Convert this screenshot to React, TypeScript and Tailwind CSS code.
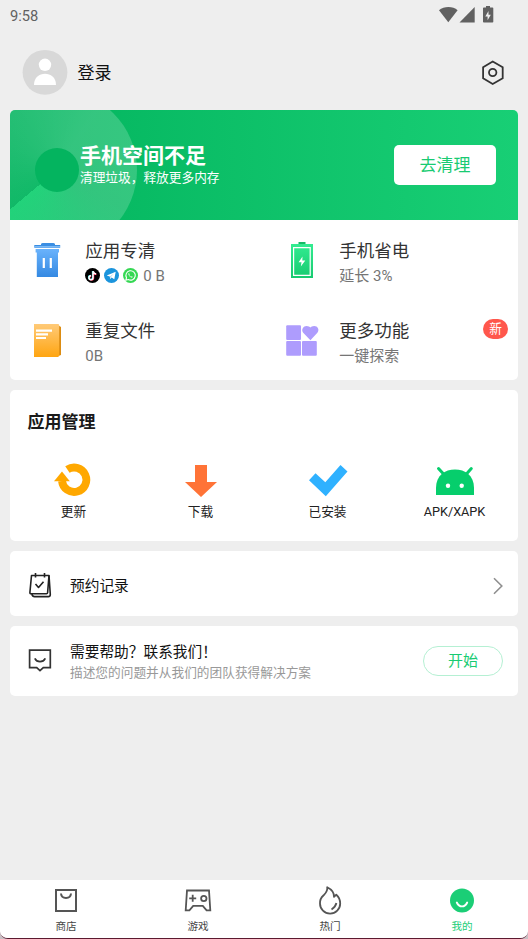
import type { ReactNode } from "react"
import clsx from "clsx"

interface FeatureProps {
  icon: ReactNode
  title: string
  badge?: string
  children: ReactNode
}

function StatusBar() {
  return (
    <div className="flex h-8 items-start justify-between pl-[10px] pr-[34px] pt-[6px] text-[#616161]">
      <span className="text-[14.700px] leading-[20px]">9:58</span>
      <svg width="56" height="18" viewBox="0 0 56 18" fill="currentColor">
        <path d="M1 4.2C6-.1 15-.1 19.600 4.200L10.300 16.200Z" />
        <path d="M36.700 1V16.500H21.500Z" />
        <path
          fillRule="evenodd"
          d="M48 0h4v1.500h2.500q.8 0 .8.800v13.400q0 .8-.8.800h-8.700q-.8 0-.8-.8V2.300q0-.8.8-.8H48zM50.500 5l-3.200 5.400h2.300v3.900l3.200-5.600h-2.300z"
        />
      </svg>
    </div>
  )
}

function Header() {
  return (
    <div className="flex h-[78px] items-start pl-[22px] pr-[23px] pt-[17px]">
      <svg width="46" height="46" viewBox="0 0 46 46">
        <circle cx="23" cy="23.300" r="22.400" fill="#d8d8d8" />
        <circle cx="23" cy="15.800" r="6.200" fill="#fff" />
        <path d="M12 36C12 21.100 34 21.100 34 36Z" fill="#fff" />
      </svg>
      <span className="ml-[9.500px] mt-[11px] flex-1 text-[17px] leading-[26px] text-[#111]">登录</span>
      <svg className="mt-[10.500px]" width="24" height="26" viewBox="0 0 24 26" fill="none" stroke="#333" strokeWidth="1.800">
        <path d="M11.700 1.500L21.700 7.200V18.300L11.700 24L2.100 18.300V7.200Z" />
        <circle cx="11.700" cy="12.500" r="3.700" />
      </svg>
    </div>
  )
}

function Banner() {
  return (
    <div className="relative flex h-[110px] items-center justify-between overflow-hidden bg-linear-to-r from-[#02b45e] to-[#18cf75] pl-[70px] pr-[22px]">
      <div className="absolute -left-[33px] -top-[20px] size-40 rounded-full bg-[conic-gradient(from_230deg,rgba(255,255,255,0.06),rgba(255,255,255,0.12)_20%,rgba(255,255,255,0.19)_45%,rgba(255,255,255,0.18)_70%,rgba(60,235,145,0.55))]" />
      <div className="absolute left-[25px] top-[37.500px] size-[44px] rounded-full bg-[#04b45f]" />
      <div className="relative mt-[2px] text-white">
        <h2 className="text-[21px] font-bold leading-[24px]">手机空间不足</h2>
        <p className="text-[12.700px] leading-[20px]">清理垃圾，释放更多内存</p>
      </div>
      <button className="h-10 w-[102px] rounded-[5px] bg-white pt-px text-[17px] text-[#18cb72]">去清理</button>
    </div>
  )
}

function TrashIcon() {
  return (
    <svg width="36" height="40" viewBox="0 0 36 40">
      <defs>
        <linearGradient id="trash" x1="0" y1="0" x2="0" y2="1">
          <stop stopColor="#6ab3fc" />
          <stop offset="1" stopColor="#3489e2" />
        </linearGradient>
      </defs>
      <path d="M11 3.800L12.500 3H23.500L25 3.800V5H30.200V7.800H4.300V5H11Z" fill="#3a8ee3" />
      <path d="M4.500 6H30V7.300H4.500Z" fill="#79b9f7" />
      <path d="M5.600 9H29V12.500H28V37H6.800V12.500H5.600Z" fill="url(#trash)" />
      <path d="M12.700 18h2.200v10h-2.200zM19.700 18h2.200v10h-2.200z" fill="#fff" />
    </svg>
  )
}

function BatteryIcon() {
  return (
    <svg width="36" height="40" viewBox="0 0 36 40">
      <defs>
        <linearGradient id="battery" x1="0" y1="0" x2="0" y2="1">
          <stop stopColor="#33ec91" />
          <stop offset="1" stopColor="#17ca70" />
        </linearGradient>
      </defs>
      <path d="M14.500 2H21.500V5H14.500Z" fill="#17b966" />
      <path d="M7 4H29V38H7Z" fill="url(#battery)" />
      <path d="M9.600 7.600H26.200V35.400H9.600Z" fill="none" stroke="#fff" strokeWidth="1.200" />
      <path d="M18.500 16.500L14.600 22.300H17.500L16.800 26.500L21.300 20.600H18.300Z" fill="#fff" />
    </svg>
  )
}

function FileIcon() {
  return (
    <svg width="36" height="40" viewBox="0 0 36 40">
      <defs>
        <linearGradient id="file" x1="0" y1="0" x2="0" y2="1">
          <stop stopColor="#ffca78" />
          <stop offset="1" stopColor="#ffa511" />
        </linearGradient>
      </defs>
      <path d="M27 4.500L31 7V35L27 36.500Z" fill="#dc8c12" />
      <path d="M4 4H28.500L29.200 5V36L28 37H4Z" fill="url(#file)" />
      <path d="M6 9.500H22v2.200H6zM6 13.200H18v2.200H6zM6 17H16v2.100H6z" fill="#fff" />
    </svg>
  )
}

function MoreIcon() {
  return (
    <svg width="36" height="40" viewBox="0 0 36 40" fill="#ae9cfd">
      <rect x="2.200" y="5.200" width="14.800" height="14.800" rx="1" />
      <rect x="2.200" y="21" width="14.800" height="14.800" rx="1" />
      <rect x="18" y="21" width="14.800" height="14.800" rx="1" />
      <path d="M26.400 20.200L19.200 12.800C16.800 9.500 19.500 6 22.500 6C24.600 6 25.700 6.800 26.400 7.600C27.100 6.800 28.200 6 30.200 6C33.500 6 35.900 9.500 33.400 12.800Z" />
    </svg>
  )
}

function AppLogos() {
  return (
    <span className="mr-[5px] flex gap-[4px]">
      <svg width="15" height="15" viewBox="0 0 15 15">
        <circle cx="7.500" cy="7.500" r="7.500" fill="#000" />
        <g fill="none" strokeWidth="1.500">
          <path d="M7.600 3V9.500A2 2 0 1 1 5.600 7.400M7.600 3Q8 5.500 10.800 5.900" stroke="#25f4ee" />
          <path d="M8.500 3.600V10A2 2 0 1 1 6.300 8M8.500 3.600Q9 6 11.500 6.400" stroke="#fe2c55" />
          <path d="M8 3.200V9.700A2 2 0 1 1 6 7.700M8 3.200Q8.500 5.700 11.100 6.100" stroke="#fff" />
        </g>
      </svg>
      <svg width="15" height="15" viewBox="0 0 15 15">
        <circle cx="7.500" cy="7.500" r="7.500" fill="#1b94dc" />
        <path d="M2.700 7.400L11.700 3.800L10.300 11.300L7.600 9.400L6.200 10.900L5.800 8.600Z" fill="#fff" />
        <path d="M5.800 8.600L10 5.500L6.700 9.200L6.200 10.900Z" fill="#b5d9ee" />
      </svg>
      <svg width="15" height="15" viewBox="0 0 15 15">
        <circle cx="7.500" cy="7.500" r="7.500" fill="#35d853" />
        <path d="M2.800 12.200L3.500 9.700A4.700 4.700 0 1 1 5.300 11.500Z" fill="none" stroke="#fff" strokeWidth="1.100" />
        <path d="M5.900 5C4 6.700 8.300 11 10 9.100L8.700 8.200L8 8.800Q6.700 8.200 6.200 7L6.700 6.300Z" fill="#fff" />
      </svg>
    </span>
  )
}

function Feature({ icon, title, badge, children }: FeatureProps) {
  return (
    <div className="flex h-20 items-start pl-5 pr-[10px]">
      <div className="mt-5 shrink-0">{icon}</div>
      <div className="ml-[19.300px] mt-[17.500px] flex-1">
        <h3 className="text-[17.500px] leading-[26px] text-[#333]">{title}</h3>
        <div className="flex items-center text-[15px] leading-[24px] text-[#757575]">{children}</div>
      </div>
      {badge && (
        <span className="mt-[19px] flex h-5 w-[25px] items-center justify-center rounded-full bg-[#ff574c] text-[12.700px] text-white">
          {badge}
        </span>
      )}
    </div>
  )
}

const manageItems = [
  {
    label: "更新",
    icon: (
      <svg width="40" height="36" viewBox="0 0 40 36">
        <path d="M13.400 7.600A12.200 12.200 0 1 1 8 19" fill="none" stroke="#ffa800" strokeWidth="7.800" />
        <path d="M0 19.200L8 9.500L15.800 19.200Z" fill="#ffa800" />
      </svg>
    ),
  },
  {
    label: "下载",
    icon: (
      <svg width="40" height="36" viewBox="0 0 40 36" fill="#ff7337">
        <path d="M14 3H26V20H36L20 35L4 20H14Z" />
      </svg>
    ),
  },
  {
    label: "已安装",
    icon: (
      <svg width="40" height="36" viewBox="0 0 40 36" fill="#2fb1ff">
        <path d="M1 18.200L7.500 11.200L17.300 20.200L32.500 3L39.500 9.600L17.800 34.300Z" />
      </svg>
    ),
  },
  {
    label: "APK/XAPK",
    icon: (
      <svg width="40" height="36" viewBox="0 0 40 36">
        <path d="M1 33V26C1 13 10 7.400 20 7.400S39 13 39 26V33Z" fill="#06ce6c" />
        <path d="M3.500 6.500L9 12.500M36.300 6.500L31 12.500" stroke="#06ce6c" strokeWidth="3" strokeLinecap="round" />
        <circle cx="13" cy="23.700" r="2.200" fill="#fff" />
        <circle cx="26.700" cy="23.700" r="2.200" fill="#fff" />
      </svg>
    ),
  },
]

const tabs = [
  {
    label: "商店",
    icon: (
      <svg width="28" height="30" viewBox="0 0 28 30" fill="none" stroke="#555" strokeWidth="2">
        <path d="M4 5H24V26H4Z" />
        <path d="M9 8.500C9.500 14.500 18.500 14.500 19 8.500" />
      </svg>
    ),
  },
  {
    label: "游戏",
    icon: (
      <svg width="28" height="30" viewBox="0 0 28 30" fill="none" stroke="#555" strokeWidth="1.800">
        <path d="M3 5.500H25L26.300 25.300H22.600L18.800 20.800H9.200L5.400 25.300H1.700Z" />
        <path d="M5.200 13.300H12.200M8.700 9.800V16.800" />
        <circle cx="19.800" cy="13.500" r="2.700" />
      </svg>
    ),
  },
  {
    label: "热门",
    icon: (
      <svg width="28" height="30" viewBox="0 0 28 30" fill="none" stroke="#555" strokeWidth="1.800" strokeLinejoin="round">
        <path d="M11.200 2.200C12 6 9.800 8 7.400 10.500A10 10 0 0 0 4 18.500A10.100 10.100 0 0 0 24.200 18.500C24.200 15 23 12 20.300 9.700L18 11.900C18.200 7.500 15.500 4.300 11.200 2.200Z" />
        <path d="M20.400 18Q19.500 22 15.500 24.500" />
      </svg>
    ),
  },
  {
    label: "我的",
    active: true,
    icon: (
      <svg width="28" height="30" viewBox="0 0 28 30" fill="none">
        <circle cx="14" cy="15.500" r="12" fill="#1bce76" />
        <path d="M8.800 17.500C11.200 22.700 16.800 22.700 19.200 17.500" stroke="#fff" strokeWidth="1.900" strokeLinecap="round" />
      </svg>
    ),
  },
]

export default function App() {
  return (
    <div className="h-[939px] w-[528px] bg-[#c9c0c4] font-['Roboto','Noto_Sans_CJK_SC',sans-serif]">
      <div className="flex h-full flex-col overflow-hidden rounded-b-[8px] border-b border-[#5b1a30] bg-[#eee]">
        <StatusBar />
        <Header />

        <main className="flex flex-1 flex-col gap-[10px] px-[10px]">
          <section className="h-[270px] overflow-hidden rounded-[5px] bg-white">
            <Banner />
            <div className="grid grid-cols-2">
              <Feature icon={<TrashIcon />} title="应用专清">
                <AppLogos />0 B
              </Feature>
              <Feature icon={<BatteryIcon />} title="手机省电">
                延长 3%
              </Feature>
              <Feature icon={<FileIcon />} title="重复文件">
                0B
              </Feature>
              <Feature icon={<MoreIcon />} title="更多功能" badge="新">
                一键探索
              </Feature>
            </div>
          </section>

          <section className="h-[151px] rounded-[5px] bg-white pt-[19px]">
            <h2 className="pl-[17.500px] text-[17px] font-bold leading-[26px] text-[#1a1a1a]">应用管理</h2>
            <div className="mt-[27px] grid grid-cols-4">
              {manageItems.map((item) => (
                <div key={item.label} className="flex flex-col items-center">
                  {item.icon}
                  <span className="mt-[4px] text-[12.700px] leading-[20px] text-[#222]">{item.label}</span>
                </div>
              ))}
            </div>
          </section>

          <section className="flex h-[65px] items-center rounded-[5px] bg-white pl-[18px] pr-[15px] pt-[4px]">
            <svg className="-mt-px" width="24" height="26" viewBox="0 0 24 26" fill="none" stroke="#222" strokeWidth="1.600" strokeLinejoin="round">
              <path d="M3.500 3.500H21L19.600 20.700Q19.500 21.700 18.500 21.700H3Q1.800 21.700 1.900 20.500Z" />
              <path d="M21 3.500L22.300 22.500Q22.300 24.600 20.300 24.600H6.500Q4.500 24.600 3.800 22" />
              <path d="M7.500 1V5.500M16.500 1V5.500M7.500 12L10.500 15.500L15.500 9.700" />
            </svg>
            <span className="ml-[18px] flex-1 pt-[2px] text-[14.700px] text-[#111]">预约记录</span>
            <svg width="10" height="18" viewBox="0 0 10 18" fill="none" stroke="#8f8f8f" strokeWidth="1.600">
              <path d="M1 1.300L8.800 9L1 16.700" />
            </svg>
          </section>

          <section className="flex h-[70px] items-center rounded-[5px] bg-white pl-[18px] pr-[15px]">
            <svg className="-mt-[2px]" width="24" height="26" viewBox="0 0 24 26" fill="none" stroke="#333" strokeWidth="1.700">
              <path d="M1.600 3.200H22.300V20.600H15.300L12 23.700L8.700 20.600H1.600Z" />
              <path d="M6.800 11.300C9 15.800 15 15.800 17.300 11.300" />
            </svg>
            <div className="ml-[18px] flex-1 pt-[2px]">
              <p className="text-[14.700px] leading-[22px] text-[#111]">需要帮助？联系我们！</p>
              <p className="text-[12.700px] leading-[20px] text-[#999]">描述您的问题并从我们的团队获得解决方案</p>
            </div>
            <button className="mb-px h-[30px] w-20 rounded-full border-[1.500px] border-[#b5f0d3] pt-[2px] text-[15px] leading-none text-[#18cb72]">
              开始
            </button>
          </section>
        </main>

        <nav className="grid h-[58px] shrink-0 grid-cols-4 bg-white pt-[5px]">
          {tabs.map((tab) => (
            <div key={tab.label} className="flex flex-col items-center">
              {tab.icon}
              <span
                className={clsx("mt-[4px] text-[10.600px] leading-[16px]", tab.active ? "text-[#1bce76]" : "text-[#444]")}
              >
                {tab.label}
              </span>
            </div>
          ))}
        </nav>
      </div>
    </div>
  )
}
